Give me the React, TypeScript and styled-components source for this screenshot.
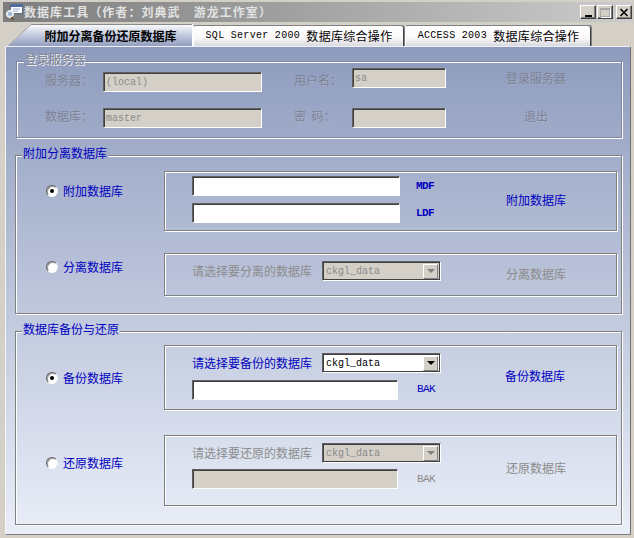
import React from "react";
import styled, { createGlobalStyle } from "styled-components";

const Global = createGlobalStyle`
  html, body { margin: 0; padding: 0; background: #d4d0c8; }
  * { box-sizing: border-box; }
`;

const cjk = `"Noto Sans CJK SC", "Liberation Sans", sans-serif`;
const mono = `"Liberation Mono", "Noto Sans CJK SC", monospace`;

const Frame = styled.div`
  width: 634px;
  height: 538px;
  overflow: hidden;
  background: #d4d0c8;
  font-family: ${cjk};
  font-size: 12px;
  line-height: 14px;
`;

const TitleBar = styled.div`
  height: 20px;
  margin: 2px 1px 0 3px;
  padding: 0 1px 0 2px;
  display: flex;
  align-items: center;
  background: linear-gradient(90deg, #7d7d7d 0%, #a4a4a4 50%, #cbcbcb 100%);
`;

const TitleText = styled.span`
  margin-left: 1px;
  font-size: 12px;
  font-weight: 700;
  letter-spacing: 1.05px;
  white-space: pre;
  color: #e2e2e2;
  flex: 1;
`;

const WinButtons = styled.div`
  display: flex;
  gap: 1px;
`;

const WinButton = styled.div<{ $gapLeft?: number }>`
  width: 16px;
  height: 14px;
  margin-left: ${(p) => p.$gapLeft ?? 0}px;
  background: #d4d0c8;
  border: 1px solid;
  border-color: #fff #404040 #404040 #fff;
  box-shadow: inset -1px -1px 0 #808080;
  display: flex;
  align-items: center;
  justify-content: center;
`;

const MinGlyph = styled.div`
  width: 7px;
  height: 2px;
  background: #000;
  margin-top: 7px;
`;

const MaxGlyph = styled.div`
  width: 10px;
  height: 9px;
  border: 1px solid #a8a8a8;
  border-top-width: 2px;
  box-shadow: 1px 1px 0 #fff;
`;

const TabStrip = styled.div`
  display: flex;
  align-items: flex-end;
  height: 22px;
  margin: 2px 0 0 5px;
`;

const ActiveTab = styled.div`
  position: relative;
  width: 188px;
  height: 22px;
  padding: 1px 0 0 23px;
  display: flex;
  align-items: center;
  justify-content: center;
  font-weight: 700;
  color: #000;
  background: linear-gradient(180deg, #ffffff 0%, #c8cfe0 45%, #939fc0 100%);
  clip-path: polygon(0 100%, 3px 100%, 26px 0, 100% 0, 100% 100%);
`;

const TabEdge = styled.svg`
  position: absolute;
  left: 0;
  top: 0;
`;

const Tab = styled.div<{ $w: number }>`
  width: ${(p) => p.$w}px;
  height: 21px;
  display: flex;
  align-items: center;
  justify-content: center;
  letter-spacing: 0.3px;
  white-space: pre;
  color: #000;
  border: 1px solid #808080;
  border-left-color: #fff;
  border-bottom: 0;
  border-radius: 3px 3px 0 0;
  box-shadow: inset -1px 0 0 #404040;
  background: linear-gradient(180deg, #ffffff 0%, #fbf8f8 60%, #d8d8e0 100%);
`;

const Mono = styled.span`
  font-family: ${mono};
  font-size: 10px;
`;

const Panel = styled.div`
  height: 489px;
  margin: 0 3px 0 5px;
  padding: 14px 8px 0 9px;
  display: flex;
  flex-direction: column;
  gap: 17px;
  border: 1px solid;
  border-color: #eef0f6 #707070 #808080 #f4f4f4;
  background: linear-gradient(180deg, #8e9bbd 0%, #a5b0cc 25%, #c3cbdf 58%, #e9eef8 100%);
`;

const Group = styled.div<{ $h: number; $pad: number }>`
  position: relative;
  height: ${(p) => p.$h}px;
  padding-top: ${(p) => p.$pad}px;
  border: 1px solid #808080;
  box-shadow: inset 1px 1px 0 #fff, 1px 1px 0 #fff;
`;

const LoginGroup = styled(Group)`
  margin-left: 1px;
  display: grid;
  grid-template-columns: 28px 58px 159px 32px 58px 94px 60px 60px;
  grid-template-rows: 24px 24px;
  row-gap: 12px;
  align-items: center;
  border-color: #7c86a4;
`;

const Legend = styled.span<{ $bg: string; $muted?: boolean }>`
  position: absolute;
  left: ${(p) => (p.$muted ? 7 : 6)}px;
  top: -10px;
  padding: 0 1px;
  background: ${(p) => p.$bg};
  color: ${(p) => (p.$muted ? "#808490" : "#0000c0")};
  text-shadow: ${(p) => (p.$muted ? "1px 1px 0 #f4f6fb" : "none")};
`;

const MutedLabel = styled.span`
  color: #7d8394;
  text-shadow: 1px 1px 0 rgba(255, 255, 255, 0.12);
  white-space: pre;
`;

const RowStart = styled.div`
  grid-column: 1;
`;

const Field = styled.input<{ $w: number; $place?: string }>`
  display: block;
  width: ${(p) => p.$w}px;
  height: 20px;
  margin: 0;
  padding: 1px 2px 0;
  align-self: ${(p) => p.$place ?? "center"};
  font-family: ${mono};
  font-size: 10px;
  outline: none;
  color: #8a8a8a;
  background: ${(p) => (p.disabled ? "#d4d0c8" : "#fff")};
  border: 1px solid;
  border-color: #606060 #fff #fff #606060;
  box-shadow: inset 1px 1px 0 #404040;
  border-radius: 0;
`;

const Option = styled.div<{ $top: number }>`
  display: flex;
  align-items: center;
  gap: 5px;
  height: 12px;
  margin-top: ${(p) => p.$top}px;
  color: #0000c0;
`;

const Radio = styled.span<{ $on?: boolean }>`
  width: 12px;
  height: 12px;
  flex: none;
  border-radius: 50%;
  display: flex;
  align-items: center;
  justify-content: center;
  background: #fff;
  border: 1px solid;
  border-color: #606060 #f0f0f0 #fff #606060;
  box-shadow: inset 1px 1px 0 #a0a0a0;
  &::after {
    content: "";
    width: 4px;
    height: 4px;
    border-radius: 50%;
    background: ${(p) => (p.$on ? "#000" : "transparent")};
  }
`;

const Entry = styled.div`
  display: grid;
  grid-template-columns: 148px 453px;
  & + & {
    margin-top: var(--entry-gap);
  }
`;

const Entries = styled.div<{ $gap: number }>`
  --entry-gap: ${(p) => p.$gap}px;
`;

const OptionCell = styled.div`
  padding-left: 30px;
`;

const Box = styled.div<{ $top: number; $bottom: number }>`
  display: flex;
  align-items: center;
  padding: ${(p) => p.$top}px 0 ${(p) => p.$bottom}px 27px;
  border: 1px solid #808080;
  box-shadow: inset 1px 1px 0 #fff, 1px 1px 0 #fff;
`;

const Fields = styled.div<{ $gap: number }>`
  width: 249px;
  display: flex;
  flex-direction: column;
  gap: ${(p) => p.$gap}px;
`;

const FieldRow = styled.div`
  display: flex;
  align-items: center;
  height: 20px;
`;

const RowLabel = styled.span<{ $off?: boolean }>`
  width: 130px;
  flex: none;
  margin-top: -1px;
  color: ${(p) => (p.$off ? "#8c8c8c" : "#0000c0")};
`;

const Suffix = styled.span<{ $gap: number; $off?: boolean; $raised?: boolean; $strong?: boolean }>`
  margin-left: ${(p) => p.$gap}px;
  margin-bottom: ${(p) => (p.$raised ? 2 : 0)}px;
  font-family: ${mono};
  font-size: 11px;
  letter-spacing: -0.6px;
  font-weight: ${(p) => (p.$strong ? 700 : 400)};
  color: ${(p) => (p.$off ? "#8c8c8c" : "#0000c0")};
`;

const Action = styled.span<{ $left: number; $down?: number; $off?: boolean }>`
  margin-left: ${(p) => p.$left}px;
  margin-top: ${(p) => p.$down ?? 0}px;
  color: ${(p) => (p.$off ? "#8c8c8c" : "#0000c0")};
`;

const LoginAction = styled.span<{ $lift?: number; $pad?: number }>`
  grid-column: 8;
  padding-left: ${(p) => p.$pad ?? 0}px;
  margin-bottom: ${(p) => p.$lift ?? 0}px;
  color: #7d8394;
  text-shadow: 1px 1px 0 rgba(255, 255, 255, 0.12);
`;

const ComboBox = styled.div<{ $off?: boolean }>`
  width: 119px;
  height: 20px;
  padding: 1px 1px 0 3px;
  display: flex;
  align-items: center;
  justify-content: space-between;
  font-family: ${mono};
  font-size: 10px;
  color: ${(p) => (p.$off ? "#8a8a8a" : "#000")};
  background: ${(p) => (p.$off ? "#d4d0c8" : "#fff")};
  border: 1px solid;
  border-color: #606060 #fff #fff #606060;
  box-shadow: inset 1px 1px 0 #404040, inset -1px -1px 0 #404040;
`;

const ComboArrow = styled.span<{ $off?: boolean }>`
  width: 15px;
  height: 15px;
  margin: -1px 1px 0 0;
  display: flex;
  align-items: center;
  justify-content: center;
  background: #d4d0c8;
  border: 1px solid;
  border-color: #fff #808080 #808080 #fff;
  &::after {
    content: "";
    border-style: solid;
    border-width: 4px 4px 0;
    border-color: ${(p) => (p.$off ? "#808080" : "#000")} transparent transparent;
  }
`;

const AppIcon = () => (
  <svg width="18" height="18" viewBox="0 0 18 18">
    <rect x="5.5" y="1.5" width="12" height="9" fill="#fff" stroke="#5a6a8a" />
    <rect x="6" y="2" width="11" height="2" fill="#4a6ab0" />
    <path d="M8 6h7M8 8h5" stroke="#a0aed0" />
    <circle cx="5" cy="11" r="3.5" fill="#dfe8f4" stroke="#f4f4f4" />
    <circle cx="5" cy="11" r="2" fill="#9db4d4" />
    <path d="M6.5 14l2 3" stroke="#6a4a20" strokeWidth="1.5" />
  </svg>
);

const CloseGlyph = () => (
  <svg width="10" height="9" viewBox="0 0 10 9">
    <path d="M1.5 1l7 7M8.5 1l-7 7" stroke="#000" strokeWidth="1.6" />
  </svg>
);

export default function App() {
  return (
    <Frame>
      <Global />
      <TitleBar>
        <AppIcon />
        <TitleText>{"数据库工具（作者：刘典武\u2003游龙工作室）"}</TitleText>
        <WinButtons>
          <WinButton><MinGlyph /></WinButton>
          <WinButton><MaxGlyph /></WinButton>
          <WinButton $gapLeft={2}><CloseGlyph /></WinButton>
        </WinButtons>
      </TitleBar>

      <TabStrip>
        <ActiveTab>
          附加分离备份还原数据库
          <TabEdge width="188" height="22" viewBox="0 0 188 22">
            <path d="M0.5 21.5H3L26 0.5H188" fill="none" stroke="#8a8a8a" />
            <path d="M187.5 0V22" fill="none" stroke="#fff" />
          </TabEdge>
        </ActiveTab>
        <Tab $w={212}><Mono>SQL Server 2000 </Mono>数据库综合操作</Tab>
        <Tab $w={187}><Mono>ACCESS 2003 </Mono>数据库综合操作</Tab>
      </TabStrip>

      <Panel>
        <LoginGroup $h={77} $pad={6}>
          <Legend $bg="#919ebf" $muted>登录服务器</Legend>
          <RowStart />
          <MutedLabel>服务器：</MutedLabel>
          <Field $w={159} $place="end" disabled defaultValue="(local)" />
          <span />
          <MutedLabel>用户名：</MutedLabel>
          <Field $w={94} $place="start" disabled defaultValue="sa" />
          <span />
          <LoginAction $lift={4}>登录服务器</LoginAction>
          <RowStart />
          <MutedLabel>数据库：</MutedLabel>
          <Field $w={159} $place="end" disabled defaultValue="master" />
          <span />
          <MutedLabel>密  码：</MutedLabel>
          <Field $w={94} $place="end" disabled />
          <span />
          <LoginAction $pad={18} $lift={1}>退出</LoginAction>
        </LoginGroup>

        <Group $h={159} $pad={15}>
          <Legend $bg="#a2adca">附加分离数据库</Legend>
          <Entries $gap={22}>
            <Entry>
              <OptionCell><Option $top={14}><Radio $on />附加数据库</Option></OptionCell>
              <Box $top={4} $bottom={7}>
                <Fields $gap={7}>
                  <FieldRow><Field $w={208} /><Suffix $gap={16} $strong>MDF</Suffix></FieldRow>
                  <FieldRow><Field $w={208} /><Suffix $gap={16} $strong>LDF</Suffix></FieldRow>
                </Fields>
                <Action $left={65}>附加数据库</Action>
              </Box>
            </Entry>
            <Entry>
              <OptionCell><Option $top={8}><Radio />分离数据库</Option></OptionCell>
              <Box $top={7} $bottom={14}>
                <Fields $gap={7}>
                  <FieldRow>
                    <RowLabel $off>请选择要分离的数据库</RowLabel>
                    <ComboBox $off>ckgl_data<ComboArrow $off /></ComboBox>
                  </FieldRow>
                </Fields>
                <Action $left={65} $down={6} $off>分离数据库</Action>
              </Box>
            </Entry>
          </Entries>
        </Group>

        <Group $h={194} $pad={13}>
          <Legend $bg="#c3cbdf">数据库备份与还原</Legend>
          <Entries $gap={25}>
            <Entry>
              <OptionCell><Option $top={27}><Radio $on />备份数据库</Option></OptionCell>
              <Box $top={7} $bottom={9}>
                <Fields $gap={7}>
                  <FieldRow>
                    <RowLabel>请选择要备份的数据库</RowLabel>
                    <ComboBox>ckgl_data<ComboArrow /></ComboBox>
                  </FieldRow>
                  <FieldRow><Field $w={206} /><Suffix $gap={19} $raised>BAK</Suffix></FieldRow>
                </Fields>
                <Action $left={64} $down={-2}>备份数据库</Action>
              </Box>
            </Entry>
            <Entry>
              <OptionCell><Option $top={22}><Radio />还原数据库</Option></OptionCell>
              <Box $top={7} $bottom={16}>
                <Fields $gap={6}>
                  <FieldRow>
                    <RowLabel $off>请选择要还原的数据库</RowLabel>
                    <ComboBox $off>ckgl_data<ComboArrow $off /></ComboBox>
                  </FieldRow>
                  <FieldRow><Field $w={206} disabled /><Suffix $gap={19} $off>BAK</Suffix></FieldRow>
                </Fields>
                <Action $left={65} $down={4} $off>还原数据库</Action>
              </Box>
            </Entry>
          </Entries>
        </Group>
      </Panel>
    </Frame>
  );
}
